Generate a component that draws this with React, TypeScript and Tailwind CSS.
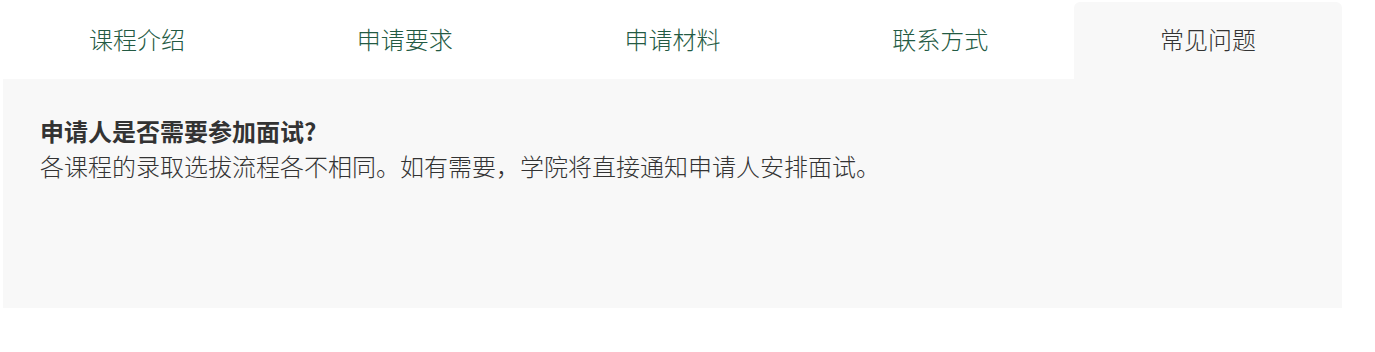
const tabs = ["课程介绍", "申请要求", "申请材料", "联系方式", "常见问题"];

export default function App() {
  const active = 4;
  return (
    <div
      className="w-[1375px] h-[352px] bg-white pt-[2px] pl-[3px]"
      style={{ fontFamily: '"Noto Sans CJK SC", "Noto Sans", sans-serif' }}
    >
      <div className="w-[1339px]">
        <div className="grid grid-cols-5 h-[77px]">
          {tabs.map((t, i) => (
            <div
              key={t}
              className={
                i === active
                  ? "flex items-center justify-center pb-[3px] rounded-t-md bg-[#f8f8f8] text-[24px] font-light text-[#333]"
                  : "flex items-center justify-center pb-[3px] text-[24px] font-light text-[#235a43]"
              }
            >
              {t}
            </div>
          ))}
        </div>
        <div className="h-[229px] bg-[#f8f8f8] px-[37px] pt-[34px] text-[#333] text-[24px] leading-[35px]">
          <div className="font-bold">申请人是否需要参加面试?</div>
          <div className="font-light">各课程的录取选拔流程各不相同。如有需要，学院将直接通知申请人安排面试。</div>
        </div>
      </div>
    </div>
  );
}
